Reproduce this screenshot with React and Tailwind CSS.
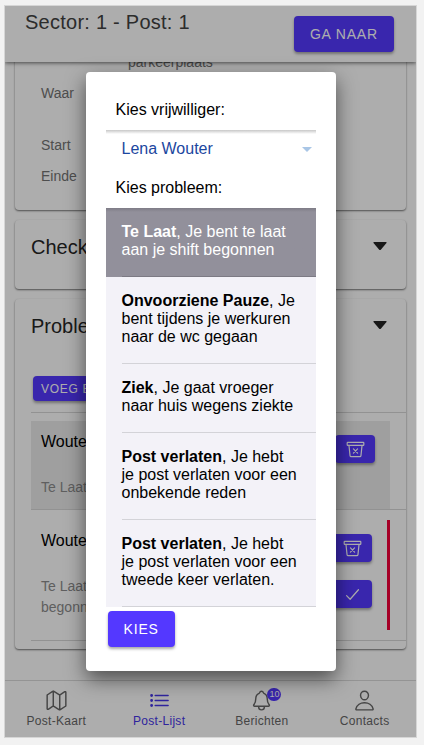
import React, { useState } from "react";
import {
  IoMapOutline,
  IoListOutline,
  IoNotificationsOutline,
  IoPersonOutline,
  IoTrashBinOutline,
  IoCheckmarkOutline,
} from "react-icons/io5";

const problems = [
  { name: "Te Laat", text: "Je bent te laat aan je shift begonnen" },
  { name: "Onvoorziene Pauze", text: "Je bent tijdens je werkuren naar de wc gegaan" },
  { name: "Ziek", text: "Je gaat vroeger naar huis wegens ziekte" },
  { name: "Post verlaten", text: "Je hebt je post verlaten voor een onbekende reden" },
  { name: "Post verlaten", text: "Je hebt je post verlaten voor een tweede keer verlaten." },
];

const tabs = [
  { label: "Post-Kaart", Icon: IoMapOutline },
  { label: "Post-Lijst", Icon: IoListOutline, active: true },
  { label: "Berichten", Icon: IoNotificationsOutline, badge: 10 },
  { label: "Contacts", Icon: IoPersonOutline },
];

const raised = "rounded bg-[#5438ff] text-white uppercase tracking-[0.06em] shadow-[0_2px_3px_rgba(0,0,0,0.35)]";

function Card({ className = "", children }) {
  return (
    <section className={`rounded bg-white shadow-[0_1px_2px_rgba(0,0,0,0.55)] ${className}`}>
      {children}
    </section>
  );
}

function CardTitle({ children }) {
  return (
    <div className="flex h-[54px] items-center justify-between pr-[19px] pl-4">
      <h2 className="text-xl text-[#262626]">{children}</h2>
      <button type="button" aria-label="Open" className="pb-0.5 text-[#222]">
        <svg width="14" height="8" viewBox="0 0 14 8" fill="currentColor">
          <path d="M1 0h12q1 0 .5 1L8 7.500Q7 8.500 6 7.500L.5 1Q0 0 1 0z" />
        </svg>
      </button>
    </div>
  );
}

function IconButton({ label, Icon }) {
  return (
    <button
      type="button"
      aria-label={label}
      className={`flex h-7 w-10 items-center justify-center ${raised}`}
    >
      <Icon size={19} />
    </button>
  );
}

function Entry({ name, text, className = "", children }) {
  return (
    <div className={`mr-4 flex pr-[15px] pl-2.5 ${className}`}>
      <div className="flex-1 pt-2.5 pr-4">
        <h3 className="text-base leading-[22px] text-black">{name}</h3>
        <p className="mt-6 text-sm leading-[21px] text-[#8c8c8c]">{text}</p>
      </div>
      <div className="flex flex-col gap-[18px] pt-3.5">{children}</div>
    </div>
  );
}

export default function App() {
  const [selected, setSelected] = useState(0);

  return (
    <div className="h-screen bg-[#f2f2f2] pt-[5px] pr-[7px] pb-[7px] pl-1 font-['Liberation_Sans',Arial,sans-serif]">
      <div className="relative flex h-full flex-col overflow-hidden border border-[#d6d6d6] bg-white">
        <header className="z-10 flex h-14 shrink-0 items-start justify-between bg-white pt-1.5 pr-[22px] pl-5 shadow-[0_1px_4px_rgba(0,0,0,0.6)]">
          <h1 className="text-xl leading-5 tracking-[0.0125em] text-[#424242]">Sector: 1 - Post: 1</h1>
          <button type="button" className={`mt-1 h-9 px-4 text-sm ${raised}`}>
            Ga naar
          </button>
        </header>

        <main className="flex flex-1 flex-col gap-2.5 overflow-hidden px-2.5">
          <Card className="-mt-3 px-[26px] pb-[18px]">
            <dl className="grid grid-cols-[87px_1fr] text-sm text-[#737373]">
              <dd className="col-start-2 h-7 leading-6">parkeerplaats</dd>
              <dt className="col-start-1 h-[52px] leading-[31px]">Waar</dt>
              <dt className="col-start-1 leading-[31px]">Start</dt>
              <dt className="col-start-1 leading-[31px]">Einde</dt>
            </dl>
          </Card>

          <Card className="pb-[15px]">
            <CardTitle>Checklist</CardTitle>
          </Card>

          <Card className="pb-2">
            <CardTitle>Problemen</CardTitle>
            <button type="button" className={`mt-[23px] ml-[18px] block h-[25px] px-2 text-xs ${raised}`}>
              Voeg een probleem toe
            </button>
            <ul className="mt-[11px] ml-4 border-t border-[#d8d8d8] pt-2">
              <li className="border-b border-[#d8d8d8]">
                <Entry name="Wouter" text="Te Laat" className="h-[88px] bg-[#ebebeb]">
                  <IconButton label="Verwijder" Icon={IoTrashBinOutline} />
                </Entry>
              </li>
              <li className="border-b border-[#d8d8d8] py-2.5">
                <Entry
                  name="Wouter"
                  text="Te Laat, Je bent te laat aan je shift begonnen"
                  className="h-[110px] border-r-3 border-[#f4003a]"
                >
                  <IconButton label="Verwijder" Icon={IoTrashBinOutline} />
                  <IconButton label="Bevestig" Icon={IoCheckmarkOutline} />
                </Entry>
              </li>
            </ul>
          </Card>
        </main>

        <nav className="grid h-[57px] shrink-0 grid-cols-4 border-t border-[#dadada] bg-white">
          {tabs.map(({ label, Icon, active, badge }) => (
            <a
              key={label}
              href="#"
              className={`flex flex-col items-center pt-2 text-xs tracking-wide ${active ? "text-[#4636e8]" : "text-[#666]"}`}
            >
              <span className="relative">
                <Icon size={23} />
                {badge && (
                  <span className="absolute -top-px left-[17px] rounded-full bg-[#5438ff] px-0.5 text-[9px] leading-[13px] tracking-normal text-white">
                    {badge}
                  </span>
                )}
              </span>
              <span className="leading-[18px]">{label}</span>
            </a>
          ))}
        </nav>

        <div className="absolute inset-0 z-20 flex items-center justify-center bg-black/32">
          <div
            role="dialog"
            aria-label="Probleem toevoegen"
            className="w-[250px] rounded bg-white p-5 text-base text-black shadow-[0_8px_20px_rgba(0,0,0,0.55)]"
          >
            <label htmlFor="volunteer" className="mb-0.5 block px-2.5 py-2 leading-5">
              Kies vrijwilliger:
            </label>
            <div className="relative bg-linear-to-b from-[#c8c8c8] to-white to-[4px]">
              <select
                id="volunteer"
                className="h-10 w-full appearance-none bg-transparent pr-6 pb-0.5 pl-4 text-[#1c47a0]"
              >
                <option>Lena Wouter</option>
              </select>
              <svg
                className="pointer-events-none absolute top-[17px] right-1 text-[#a9c6e6]"
                width="10"
                height="5"
                viewBox="0 0 10 5"
                fill="currentColor"
              >
                <path d="M0 0h10L5 5z" />
              </svg>
            </div>
            <h2 className="mb-0.5 px-2.5 py-2 leading-5">Kies probleem:</h2>
            <ul>
              {problems.map((p, i) => (
                <li key={i}>
                  <button
                    type="button"
                    aria-pressed={selected === i}
                    onClick={() => setSelected(i)}
                    className={`block w-full pl-4 text-left leading-[18px] ${
                      selected === i
                        ? "bg-[#92909b] bg-linear-to-b from-[#7e7c86] to-[#92909b] to-[4px] text-white"
                        : "bg-[#f3f2f8] text-black"
                    }`}
                  >
                    <span
                      className={`block border-b pt-[15px] pr-4 pb-[17px] ${selected === i ? "border-[#7c7a84]" : "border-[#d3d3d8]"}`}
                    >
                      <b>{p.name}</b>, {p.text}
                    </span>
                  </button>
                </li>
              ))}
            </ul>
            <button type="button" className={`mx-0.5 my-1 block h-9 px-4 text-sm ${raised}`}>
              Kies
            </button>
          </div>
        </div>
      </div>
    </div>
  );
}
